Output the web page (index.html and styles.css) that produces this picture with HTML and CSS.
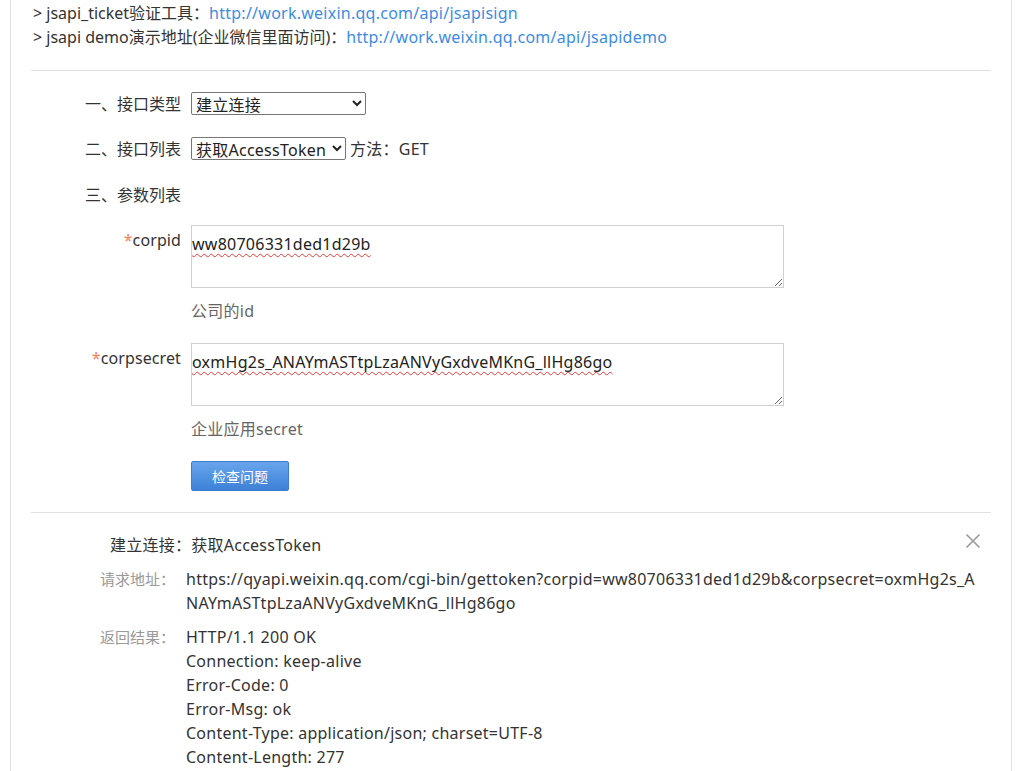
FILE: index.html
```html
<!DOCTYPE html>
<html lang="zh-CN">
<head>
<meta charset="utf-8">
<title>接口调试工具</title>
<link rel="stylesheet" href="styles.css">
</head>
<body>
<div class="page">
  <div class="links">
    <p>&gt; jsapi_ticket验证工具：<a href="#">http://work.weixin.qq.com/api/jsapisign</a></p>
    <p>&gt; jsapi demo演示地址(企业微信里面访问)：<a href="#">http://work.weixin.qq.com/api/jsapidemo</a></p>
  </div>
  <hr class="divider">
  <form class="form">
    <div class="row">
      <label class="row-label">一、接口类型</label>
      <select class="sel sel-type"><option>建立连接</option></select>
    </div>
    <div class="row">
      <label class="row-label">二、接口列表</label>
      <select class="sel sel-api"><option>获取AccessToken</option></select>
      <span class="method">方法：GET</span>
    </div>
    <div class="row row-text">
      <label class="row-label">三、参数列表</label>
    </div>
    <div class="param">
      <label class="param-label"><span class="req">*</span>corpid</label>
      <div class="param-body">
        <textarea class="field" spellcheck="false">ww80706331ded1d29b</textarea>
        <div class="hint">公司的id</div>
      </div>
    </div>
    <div class="param">
      <label class="param-label"><span class="req">*</span>corpsecret</label>
      <div class="param-body">
        <textarea class="field" spellcheck="false">oxmHg2s_ANAYmASTtpLzaANVyGxdveMKnG_llHg86go</textarea>
        <div class="hint">企业应用secret</div>
      </div>
    </div>
    <div class="actions">
      <button type="button" class="btn">检查问题</button>
    </div>
  </form>
  <hr class="divider">
  <div class="result">
    <button type="button" class="close" aria-label="关闭">
      <svg width="16" height="16" viewBox="0 0 16 16"><path d="M1.5 1.5 L14.5 14.5 M14.5 1.5 L1.5 14.5" stroke="#9a9a9a" stroke-width="1.6" fill="none"/></svg>
    </button>
    <div class="result-title">建立连接：获取AccessToken</div>
    <div class="kv">
      <div class="k">请求地址：</div>
      <div class="v url">https://qyapi.weixin.qq.com/cgi-bin/gettoken?corpid=ww80706331ded1d29b&amp;corpsecret=oxmHg2s_ANAYmASTtpLzaANVyGxdveMKnG_llHg86go</div>
    </div>
    <div class="kv">
      <div class="k">返回结果：</div>
      <div class="v">
        <div>HTTP/1.1 200 OK</div>
        <div>Connection: keep-alive</div>
        <div>Error-Code: 0</div>
        <div>Error-Msg: ok</div>
        <div>Content-Type: application/json; charset=UTF-8</div>
        <div>Content-Length: 277</div>
      </div>
    </div>
  </div>
</div>
</body>
</html>
```

FILE: styles.css
```css
* { box-sizing: border-box; }
html, body { margin: 0; padding: 0; background: #fff; }
body {
  font-family: "Noto Sans", "Noto Sans CJK SC", sans-serif;
  font-size: 16px;
  line-height: 24px;
  color: #333;
  letter-spacing: 0.25px;
}
.page {
  margin-left: 10px;
  width: 1002px;
  min-height: 771px;
  border-left: 1px solid #e2e2e2;
  border-right: 1px solid #e2e2e2;
  padding: 1px 20px 0 20px;
}
.links p { margin: 0; padding-left: 2px; letter-spacing: 0; }
.links a { color: #3d8ce2; text-decoration: none; letter-spacing: 0.25px; }
.divider {
  border: 0;
  border-top: 1px solid #e0e0e0;
  margin: 21px 0 0 0;
  height: 0;
}
.form { padding-top: 21px; }
.row {
  display: flex;
  align-items: center;
  height: 23px;
  margin-bottom: 22px;
}
.row-text { height: 26px; margin-top: 2px; margin-bottom: 17px; }
.row-label {
  width: 160px;
  padding-left: 54px;
  padding-right: 10px;
  flex: none;
  white-space: nowrap;
  letter-spacing: 0;
}
.sel {
  height: 23px;
  font: inherit;
  font-size: 16px;
  letter-spacing: 0.25px;
  color: #222;
  border: 1px solid #767676;
  border-radius: 2px;
  background: #fff;
  padding: 0;
}
.sel-type { width: 175px; }
.sel-api { width: 155px; }
.method { margin-left: 4px; }
.param { display: flex; align-items: flex-start; }
.param + .param { margin-top: 20px; }
.param-label {
  width: 160px;
  padding-right: 10px;
  text-align: right;
  padding-top: 3px;
  flex: none;
  letter-spacing: 0.1px;
}
.req { color: #f2825a; }
.field {
  display: block;
  width: 593px;
  height: 63px;
  border: 1px solid #d0d0d0;
  padding: 6px 0 0 0;
  font: inherit;
  font-size: 16px;
  letter-spacing: 0.25px;
  line-height: 24px;
  color: #222;
  resize: vertical;
  text-decoration: underline wavy #e53b3b;
  text-decoration-skip-ink: none;
  text-underline-offset: 3px;
  text-decoration-thickness: 1px;
}
.hint { color: #666; margin-top: 11px; }
.actions { padding-left: 160px; margin-top: 20px; }
.btn {
  display: block;
  width: 98px;
  height: 30px;
  border: 1px solid #3b7cd2;
  border-radius: 2px;
  background: linear-gradient(#68a5ec, #3d81d6);
  color: #fff;
  font-family: "Noto Sans CJK SC", sans-serif;
  font-size: 14px;
  letter-spacing: 0;
  padding: 0;
}
.result { position: relative; padding-top: 20px; }
.close {
  position: absolute;
  right: 10px;
  top: 20px;
  border: 0;
  background: none;
  padding: 0;
  width: 16px;
  height: 16px;
}
.close svg { display: block; }
.result-title { padding-left: 79px; }
.kv { display: flex; margin-top: 10px; }
.k {
  width: 155px;
  padding-left: 69px;
  flex: none;
  color: #999;
  font-size: 15px;
  letter-spacing: 0;
}
.v { flex: 1; word-break: break-all; padding-right: 8px; }
```
